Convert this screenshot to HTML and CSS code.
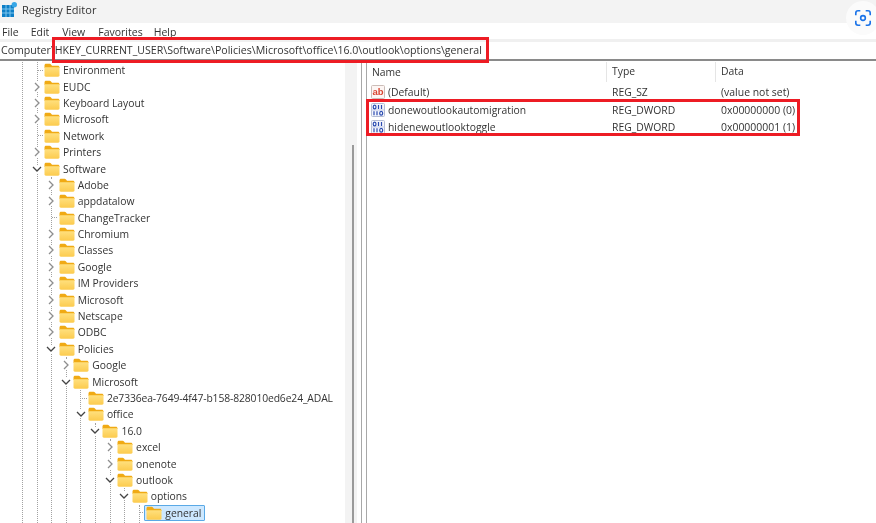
FILE: index.html
```html
<!DOCTYPE html>
<html lang="en">
<head>
<meta charset="utf-8">
<title>Registry Editor</title>
<link rel="stylesheet" href="styles.css">
</head>
<body>
<svg class="defs" width="0" height="0" aria-hidden="true">
  <defs>
    <linearGradient id="fg" x1="0" y1="0" x2="0" y2="1"><stop offset="0" stop-color="#ffe07e"/><stop offset="1" stop-color="#fccb4e"/></linearGradient>
    <symbol id="folder" viewBox="0 0 16 14">
      <path d="M.5 2.5C.5 1.4 1.2.8 2 .8h3.6c.6 0 1 .2 1.4.7l1 1.2h6c.7 0 1.5.6 1.5 1.5V5H.5z" fill="#f0aa14"/>
      <path d="M.5 4.2h15v8.3c0 .7-.6 1.2-1.3 1.2H1.800c-.7 0-1.300-.5-1.300-1.200z" fill="url(#fg)"/>
    </symbol>
    <symbol id="right" viewBox="0 0 8 10"><path d="M2 1l4 4-4 4" fill="none" stroke="#8e8e8e" stroke-width="1.300"/></symbol>
    <symbol id="down" viewBox="0 0 10 8"><path d="M1 2l4 4 4-4" fill="none" stroke="#444" stroke-width="1.300"/></symbol>
    <symbol id="dword" viewBox="0 0 14 14">
      <path d="M.5 1.500A1 1 0 0 1 1.500.5h11a1 1 0 0 1 1 1v11a1 1 0 0 1-1 1h-11a1 1 0 0 1-1-1z" fill="#f4f6fc" stroke="#b4bcd4"/>
      <path d="M.5 7h13" stroke="#c3cbe6" stroke-width="1"/>
      <g fill="none" stroke="#2a4bb0" stroke-width="1.200">
        <ellipse cx="3.600" cy="4" rx="1.400" ry="1.900"/><path d="M7.500 2v4"/><path d="M10.500 2v4"/>
        <path d="M3 8.200v4"/><path d="M6 8.200v4"/><ellipse cx="10.200" cy="10.200" rx="1.500" ry="1.900"/>
      </g>
    </symbol>
  </defs>
</svg>
<div class="app">
  <header class="titlebar">
    <svg class="app-icon" viewBox="0 0 15 15" aria-hidden="true">
      <rect x="0" y="3" width="12" height="12" fill="#0f7fc6"/>
      <path d="M4 3v12M8 3v12M0 7h12M0 11h12" stroke="#7cc6ee" stroke-width="1"/>
      <circle cx="12.300" cy="2.700" r="2.700" fill="#37a6e6"/>
    </svg>
    <span class="title">Registry Editor</span>
  </header>
  <nav class="menubar">
    <span class="menu m-file">File</span>
    <span class="menu m-edit">Edit</span>
    <span class="menu m-view">View</span>
    <span class="menu m-fav">Favorites</span>
    <span class="menu m-help">Help</span>
  </nav>
  <div class="addressbar">Computer\HKEY_CURRENT_USER\Software\Policies\Microsoft\office\16.0\outlook\options\general</div>
  <main class="panes">
    <section class="tree-pane">
      <div class="tree-scroll">
        <ul class="tree root"><li><ul class="tree">
          <li><div class="row leaf"><span class="tw"></span><span class="node"><svg class="fold"><use href="#folder"/></svg><span>Environment</span></span></div></li>
          <li><div class="row"><span class="tw"><svg class="chev-r"><use href="#right"/></svg></span><span class="node"><svg class="fold"><use href="#folder"/></svg><span>EUDC</span></span></div></li>
          <li><div class="row"><span class="tw"><svg class="chev-r"><use href="#right"/></svg></span><span class="node"><svg class="fold"><use href="#folder"/></svg><span>Keyboard Layout</span></span></div></li>
          <li><div class="row"><span class="tw"><svg class="chev-r"><use href="#right"/></svg></span><span class="node"><svg class="fold"><use href="#folder"/></svg><span>Microsoft</span></span></div></li>
          <li><div class="row leaf"><span class="tw"></span><span class="node"><svg class="fold"><use href="#folder"/></svg><span>Network</span></span></div></li>
          <li><div class="row"><span class="tw"><svg class="chev-r"><use href="#right"/></svg></span><span class="node"><svg class="fold"><use href="#folder"/></svg><span>Printers</span></span></div></li>
          <li><div class="row"><span class="tw"><svg class="chev-d"><use href="#down"/></svg></span><span class="node"><svg class="fold"><use href="#folder"/></svg><span>Software</span></span></div>
            <ul class="tree">
              <li><div class="row"><span class="tw"><svg class="chev-r"><use href="#right"/></svg></span><span class="node"><svg class="fold"><use href="#folder"/></svg><span>Adobe</span></span></div></li>
              <li><div class="row"><span class="tw"><svg class="chev-r"><use href="#right"/></svg></span><span class="node"><svg class="fold"><use href="#folder"/></svg><span>appdatalow</span></span></div></li>
              <li><div class="row leaf"><span class="tw"></span><span class="node"><svg class="fold"><use href="#folder"/></svg><span>ChangeTracker</span></span></div></li>
              <li><div class="row"><span class="tw"><svg class="chev-r"><use href="#right"/></svg></span><span class="node"><svg class="fold"><use href="#folder"/></svg><span>Chromium</span></span></div></li>
              <li><div class="row"><span class="tw"><svg class="chev-r"><use href="#right"/></svg></span><span class="node"><svg class="fold"><use href="#folder"/></svg><span>Classes</span></span></div></li>
              <li><div class="row"><span class="tw"><svg class="chev-r"><use href="#right"/></svg></span><span class="node"><svg class="fold"><use href="#folder"/></svg><span>Google</span></span></div></li>
              <li><div class="row"><span class="tw"><svg class="chev-r"><use href="#right"/></svg></span><span class="node"><svg class="fold"><use href="#folder"/></svg><span>IM Providers</span></span></div></li>
              <li><div class="row"><span class="tw"><svg class="chev-r"><use href="#right"/></svg></span><span class="node"><svg class="fold"><use href="#folder"/></svg><span>Microsoft</span></span></div></li>
              <li><div class="row"><span class="tw"><svg class="chev-r"><use href="#right"/></svg></span><span class="node"><svg class="fold"><use href="#folder"/></svg><span>Netscape</span></span></div></li>
              <li><div class="row"><span class="tw"><svg class="chev-r"><use href="#right"/></svg></span><span class="node"><svg class="fold"><use href="#folder"/></svg><span>ODBC</span></span></div></li>
              <li><div class="row"><span class="tw"><svg class="chev-d"><use href="#down"/></svg></span><span class="node"><svg class="fold"><use href="#folder"/></svg><span>Policies</span></span></div>
                <ul class="tree">
                  <li><div class="row"><span class="tw"><svg class="chev-r"><use href="#right"/></svg></span><span class="node"><svg class="fold"><use href="#folder"/></svg><span>Google</span></span></div></li>
                  <li><div class="row"><span class="tw"><svg class="chev-d"><use href="#down"/></svg></span><span class="node"><svg class="fold"><use href="#folder"/></svg><span>Microsoft</span></span></div>
                    <ul class="tree">
                      <li><div class="row leaf"><span class="tw"></span><span class="node"><svg class="fold"><use href="#folder"/></svg><span class="tight">2e7336ea-7649-4f47-b158-828010ed6e24_ADAL</span></span></div></li>
                      <li><div class="row"><span class="tw"><svg class="chev-d"><use href="#down"/></svg></span><span class="node"><svg class="fold"><use href="#folder"/></svg><span>office</span></span></div>
                        <ul class="tree">
                          <li><div class="row"><span class="tw"><svg class="chev-d"><use href="#down"/></svg></span><span class="node"><svg class="fold"><use href="#folder"/></svg><span>16.0</span></span></div>
                            <ul class="tree">
                              <li><div class="row"><span class="tw"><svg class="chev-r"><use href="#right"/></svg></span><span class="node"><svg class="fold"><use href="#folder"/></svg><span>excel</span></span></div></li>
                              <li><div class="row"><span class="tw"><svg class="chev-r"><use href="#right"/></svg></span><span class="node"><svg class="fold"><use href="#folder"/></svg><span>onenote</span></span></div></li>
                              <li><div class="row"><span class="tw"><svg class="chev-d"><use href="#down"/></svg></span><span class="node"><svg class="fold"><use href="#folder"/></svg><span>outlook</span></span></div>
                                <ul class="tree">
                                  <li><div class="row"><span class="tw"><svg class="chev-d"><use href="#down"/></svg></span><span class="node"><svg class="fold"><use href="#folder"/></svg><span>options</span></span></div>
                                    <ul class="tree">
                                      <li><div class="row leaf"><span class="tw"></span><span class="node selected"><svg class="fold"><use href="#folder"/></svg><span>general</span></span></div></li>
                                    </ul>
                                  </li>
                                </ul>
                              </li>
                            </ul>
                          </li>
                        </ul>
                      </li>
                    </ul>
                  </li>
                </ul>
              </li>
            </ul>
          </li>
        </ul></li></ul>
      </div>
      <div class="scrollbar"><div class="thumb"></div></div>
    </section>
    <section class="list-pane">
      <div class="list-head">
        <span class="col-name">Name</span>
        <span class="col-type">Type</span>
        <span class="col-data">Data</span>
      </div>
      <div class="list-row">
        <span class="col-name cell-name">
          <svg class="val-icon" viewBox="0 0 14 14" aria-hidden="true"><path d="M.5 1.500A1 1 0 0 1 1.500.5h11a1 1 0 0 1 1 1v11a1 1 0 0 1-1 1h-11a1 1 0 0 1-1-1z" fill="#fdf6f4" stroke="#cbbdb8"/><text class="ab" x="7" y="9.500" text-anchor="middle">ab</text></svg>
          (Default)
        </span>
        <span class="col-type">REG_SZ</span>
        <span class="col-data">(value not set)</span>
      </div>
      <div class="list-row">
        <span class="col-name cell-name"><svg class="val-icon"><use href="#dword"/></svg>donewoutlookautomigration</span>
        <span class="col-type">REG_DWORD</span>
        <span class="col-data">0x00000000 (0)</span>
      </div>
      <div class="list-row">
        <span class="col-name cell-name"><svg class="val-icon"><use href="#dword"/></svg>hidenewoutlooktoggle</span>
        <span class="col-type">REG_DWORD</span>
        <span class="col-data">0x00000001 (1)</span>
      </div>
    </section>
  </main>
</div>
<div class="mark mark-address"></div>
<div class="mark mark-values"></div>
<div class="lens">
  <svg viewBox="0 0 20 20" aria-hidden="true">
    <path d="M2 7V4.500A2.500 2.500 0 0 1 4.500 2H7M13 2h2.500A2.500 2.500 0 0 1 18 4.500V7M18 13v2.500a2.500 2.500 0 0 1-2.500 2.500H13M7 18H4.500A2.500 2.500 0 0 1 2 15.500V13" fill="none" stroke="#1a73e8" stroke-width="1.800"/>
    <circle cx="10" cy="10" r="2.600" fill="none" stroke="#1a73e8" stroke-width="1.800"/>
  </svg>
</div>
</body>
</html>
```
FILE: styles.css
```css
* { box-sizing: border-box; }
html, body { margin: 0; padding: 0; height: 100%; overflow: hidden; background: #fff; }
body { font-family: "Open Sans", "Noto Sans", sans-serif; font-size: 10.5px; color: #333; position: relative; }
.defs { display: block; height: 0; }
.app { width: 876px; height: 523px; display: flex; flex-direction: column; filter: blur(.3px); }

.titlebar { height: 23px; background: #f3f3f3; display: flex; align-items: center; padding-left: 2px; padding-bottom: 5px; gap: 5px; flex: none; }
.app-icon { width: 15px; height: 15px; }
.title { font-size: 11px; }

.menubar { height: 16px; display: flex; align-items: center; flex: none; padding-top: 1px; }
.menu { display: block; }
.m-file { margin-left: 2px; }
.m-edit { margin-left: 12px; }
.m-view { margin-left: 13px; }
.m-fav { margin-left: 13px; }
.m-help { margin-left: 11px; }

.addressbar { height: 22px; flex: none; border-top: 3px solid #f0f0f0; border-bottom: 2px solid #8a8a8a; padding-left: 1px; font-size: 10.6px; line-height: 17px; white-space: nowrap; }

.panes { flex: 1; min-height: 0; display: flex; padding-top: 1px; }
.tree-pane { width: 362px; flex: none; display: flex; border-right: 1px solid #a8a8a8; padding-right: 4px; }
.tree-scroll { width: 345px; flex: none; overflow: hidden; padding-left: 22px; font-size: 10.35px; }
.scrollbar { width: 12px; flex: none; background: #f3f3f3; padding: 83px 0 0 7px; }
.thumb { width: 2px; height: 100%; background: #9a9a9a; }

.tree { list-style: none; margin: 0; padding: 0 0 4px; }
.tree .tree { margin-left: 13.6px; border-left: 1px dotted #a2a2a2; }
.root { border-left: 1px dotted #a2a2a2; }
.root > li > .tree { margin-left: 13.6px; }
.row { height: 16.4px; display: flex; align-items: center; margin-left: -7.8px; white-space: nowrap; }
.tw { width: 14px; height: 100%; flex: none; display: flex; align-items: center; justify-content: center; }
.leaf .tw { background: repeating-linear-gradient(90deg, #a2a2a2 0 1px, transparent 1px 2px) 8px 50% / 6px 1px no-repeat; }
.chev-r { width: 8px; height: 10px; background: #fff; }
.chev-d { width: 10px; height: 8px; background: #fff; }
.node { display: flex; align-items: center; height: 16.4px; padding: 0 3px 0 1px; border: 1px solid transparent; margin-left: -1.7px; }
.fold { width: 16px; height: 14px; margin-right: 3px; flex: none; }
.tight { letter-spacing: -.12px; }
.selected { background: #cde8ff; border-color: #5aa9e6; border-radius: 1px; }

.list-pane { flex: 1; margin-left: 4px; border-left: 1px solid #a8a8a8; font-size: 10.35px; }
.list-head { height: 20px; display: flex; align-items: center; padding-left: 5px; margin-bottom: 1.4px; }
.list-head .col-name { width: 234px; }
.list-head .col-type, .list-head .col-data { border-left: 1px solid #e5e5e5; height: 20px; line-height: 18px; padding-left: 5px; }
.list-head .col-name { padding-bottom: 1px; }
.list-row { height: 17.5px; display: flex; align-items: center; padding-left: 4px; }
.col-name { width: 240px; flex: none; display: flex; align-items: center; }
.col-type { width: 109px; flex: none; }
.list-row .col-type { padding-left: 1px; }
.list-row .col-data { padding-left: 1px; font-size: 10.45px; }
.col-data { flex: none; }
.val-icon { width: 14px; height: 14px; margin-right: 3px; flex: none; }
.ab { font: bold 9.5px "Liberation Sans", sans-serif; fill: #d9432f; }

.mark { position: absolute; border: 3px solid #ed1c24; }
.mark-address { left: 52px; top: 37px; width: 437px; height: 26px; }
.mark-values { left: 366px; top: 99px; width: 434px; height: 37px; }

.lens { position: absolute; left: 846px; top: 1px; width: 34px; height: 34px; border-radius: 50%; background: #fbfbfb; display: flex; align-items: center; justify-content: center; }
.lens svg { width: 18px; height: 18px; }
```
